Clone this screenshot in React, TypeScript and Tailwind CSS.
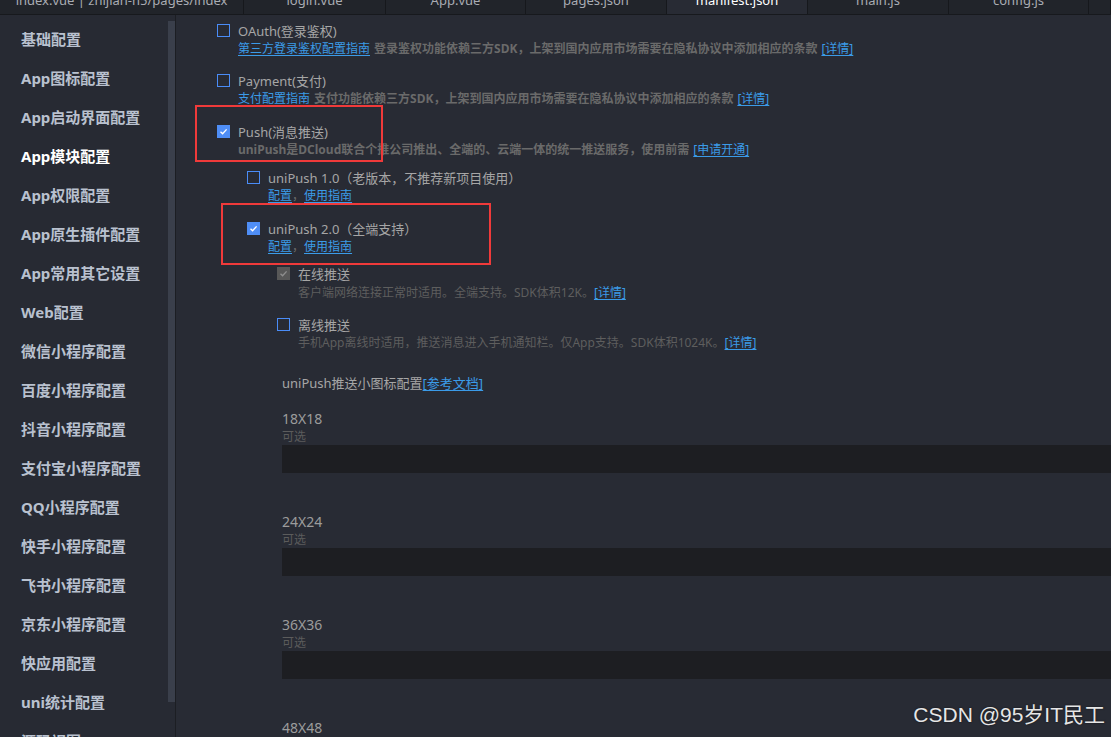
import React from "react";

const FONT = '"Noto Sans", "Noto Sans CJK SC", sans-serif';

const tabs = [
  { name: "index.vue | zhijian-h5/pages/index", w: "w-[244px]" },
  { name: "login.vue", w: "w-[142px]" },
  { name: "App.vue", w: "w-[140px]" },
  { name: "pages.json", w: "w-[141px]" },
  { name: "manifest.json", w: "w-[141px]", active: true },
  { name: "main.js", w: "w-[141px]" },
  { name: "config.js", w: "w-[140px]" },
  { name: "", w: "w-[22px]" },
];

const sideItems = [
  "基础配置",
  "App图标配置",
  "App启动界面配置",
  "App模块配置",
  "App权限配置",
  "App原生插件配置",
  "App常用其它设置",
  "Web配置",
  "微信小程序配置",
  "百度小程序配置",
  "抖音小程序配置",
  "支付宝小程序配置",
  "QQ小程序配置",
  "快手小程序配置",
  "飞书小程序配置",
  "京东小程序配置",
  "快应用配置",
  "uni统计配置",
  "源码视图",
];

function Box({ checked, disabled }: { checked?: boolean; disabled?: boolean }) {
  if (disabled) {
    return (
      <span className="mt-[2px] w-[13px] h-[13px] bg-[#585858] flex items-center justify-center shrink-0">
        <svg width="11" height="11" viewBox="0 0 11 11">
          <path d="M2.5 5.8 L4.6 7.8 L8.6 3.4" stroke="#8e8e8e" strokeWidth="1.4" fill="none" />
        </svg>
      </span>
    );
  }
  if (checked) {
    return (
      <span className="mt-[2px] w-[13px] h-[13px] bg-[#4f8ef6] flex items-center justify-center shrink-0">
        <svg width="11" height="11" viewBox="0 0 11 11">
          <path d="M2.5 5.8 L4.6 7.8 L8.6 3.4" stroke="#ffffff" strokeWidth="1.4" fill="none" />
        </svg>
      </span>
    );
  }
  return (
    <span className="mt-[2px] block w-[13px] h-[13px] border border-solid border-[#4a8cf7] shrink-0" />
  );
}

function Link({ children }: { children: React.ReactNode }) {
  return <span className="text-[#3b9be8] underline underline-offset-2">{children}</span>;
}

function Option({
  mt,
  indent,
  label,
  checked,
  disabled,
  children,
}: {
  mt: string;
  indent: string;
  label: string;
  checked?: boolean;
  disabled?: boolean;
  children: React.ReactNode;
}) {
  return (
    <div className={`${mt} ${indent}`}>
      <div className="h-[18px] flex items-start gap-[8px]">
        <Box checked={checked} disabled={disabled} />
        <span className="text-[13px] text-[#a6a6a6] leading-[18px] whitespace-nowrap">{label}</span>
      </div>
      <div className="h-[17px] pl-[21px] flex items-center text-[12px] leading-[17px] whitespace-nowrap">
        {children}
      </div>
    </div>
  );
}

function IconSlot({ size, mt }: { size: string; mt: string }) {
  return (
    <div className={mt}>
      <div className="h-[18px] text-[14px] leading-[18px] text-[#9c9c9c]">{size}</div>
      <div className="h-[17px] text-[12px] leading-[17px] text-[#5c5c5c]">可选</div>
      <div className="h-[28px] w-[900px] bg-[#1d1e22]" />
    </div>
  );
}

export default function App() {
  return (
    <div
      className="w-[1111px] h-[737px] overflow-hidden bg-[#282b34] flex flex-col relative"
      style={{ fontFamily: FONT }}
    >
      {/* tab bar */}
      <div className="h-[15px] shrink-0 flex bg-[#21242a] border-b border-[#17191d] overflow-hidden">
        {tabs.map((t, i) => (
          <div
            key={i}
            className={`${t.w} shrink-0 h-[14px] overflow-hidden flex justify-center border-r border-[#16181c] ${
              t.active ? "bg-[#282b34] text-white" : "text-[#a9acb3]"
            }`}
          >
            <span className="text-[13px] leading-[16px] mt-[-8px] whitespace-nowrap">{t.name}</span>
          </div>
        ))}
      </div>

      <div className="flex flex-1 min-h-0">
        {/* sidebar */}
        <div className="w-[168px] shrink-0 pt-[5px] bg-[#272a33]">
          {sideItems.map((s, i) => (
            <div
              key={s}
              className={`h-[39px] flex items-center pl-[21px] text-[15px] font-bold whitespace-nowrap ${
                i === 3 ? "text-white" : "text-[#b9c1cf]"
              }`}
            >
              {s}
            </div>
          ))}
        </div>
        {/* scrollbar */}
        <div className="w-[7px] shrink-0 bg-[#272a33]">
          <div className="mt-[6px] h-[681px] bg-[#3a3f4b]" />
        </div>
        <div className="w-[1px] shrink-0 bg-[#1c1e23]" />

        {/* main */}
        <div className="flex-1 min-w-0 pl-[41px] pt-[7px] overflow-hidden">
          <Option mt="mt-0" indent="" label="OAuth(登录鉴权)">
            <Link>第三方登录鉴权配置指南</Link>
            <span className="text-[#6a6a6a] font-bold ml-[4px]">
              登录鉴权功能依赖三方SDK，上架到国内应用市场需要在隐私协议中添加相应的条款
            </span>
            <span className="ml-[4px]">
              <Link>[详情]</Link>
            </span>
          </Option>
          <Option mt="mt-[15px]" indent="" label="Payment(支付)">
            <Link>支付配置指南</Link>
            <span className="text-[#6a6a6a] font-bold ml-[4px]">
              支付功能依赖三方SDK，上架到国内应用市场需要在隐私协议中添加相应的条款
            </span>
            <span className="ml-[4px]">
              <Link>[详情]</Link>
            </span>
          </Option>
          <Option mt="mt-[16px]" indent="" label="Push(消息推送)" checked>
            <span className="text-[#6a6a6a] font-bold">
              uniPush是DCloud联合个推公司推出、全端的、云端一体的统一推送服务，使用前需
            </span>
            <span className="ml-[4px]">
              <Link>[申请开通]</Link>
            </span>
          </Option>
          <Option mt="mt-[11px]" indent="pl-[30px]" label="uniPush 1.0（老版本，不推荐新项目使用）">
            <Link>配置</Link>
            <span className="text-[#6a6a6a]">，</span>
            <Link>使用指南</Link>
          </Option>
          <Option mt="mt-[16px]" indent="pl-[30px]" label="uniPush 2.0（全端支持）" checked>
            <Link>配置</Link>
            <span className="text-[#6a6a6a]">，</span>
            <Link>使用指南</Link>
          </Option>
          <Option mt="mt-[10px]" indent="pl-[60px]" label="在线推送" disabled>
            <span className="text-[#5e5e5e] mt-[2px]">客户端网络连接正常时适用。全端支持。SDK体积12K。</span>
            <span className="mt-[2px]">
              <Link>[详情]</Link>
            </span>
          </Option>
          <Option mt="mt-[16px]" indent="pl-[60px]" label="离线推送">
            <span className="text-[#5e5e5e]">
              手机App离线时适用，推送消息进入手机通知栏。仅App支持。SDK体积1024K。
            </span>
            <Link>[详情]</Link>
          </Option>

          <div className="pl-[65px]">
            <div className="mt-[23px] h-[18px] text-[13px] leading-[18px] text-[#a6a6a6] whitespace-nowrap">
              uniPush推送小图标配置<Link>[参考文档]</Link>
            </div>
            <IconSlot size="18X18" mt="mt-[18px]" />
            <IconSlot size="24X24" mt="mt-[40px]" />
            <IconSlot size="36X36" mt="mt-[40px]" />
            <IconSlot size="48X48" mt="mt-[40px]" />
          </div>
        </div>
      </div>

      {/* annotation boxes */}
      <div className="absolute left-[195px] top-[105px] w-[188px] h-[57px] border-2 border-[#f03a3a]" />
      <div className="absolute left-[221px] top-[203px] w-[270px] h-[62px] border-2 border-[#f03a3a]" />

      {/* watermark */}
      <div
        className="absolute right-[6px] top-[701px] text-[21px] leading-[28px] text-[#e6e6e6] whitespace-nowrap"
        style={{
          fontFamily: '"Liberation Sans", "Noto Sans CJK SC", sans-serif',
          textShadow: "0 0 2px rgba(0,0,0,0.6)",
        }}
      >
        CSDN @95岁IT民工
      </div>
    </div>
  );
}
